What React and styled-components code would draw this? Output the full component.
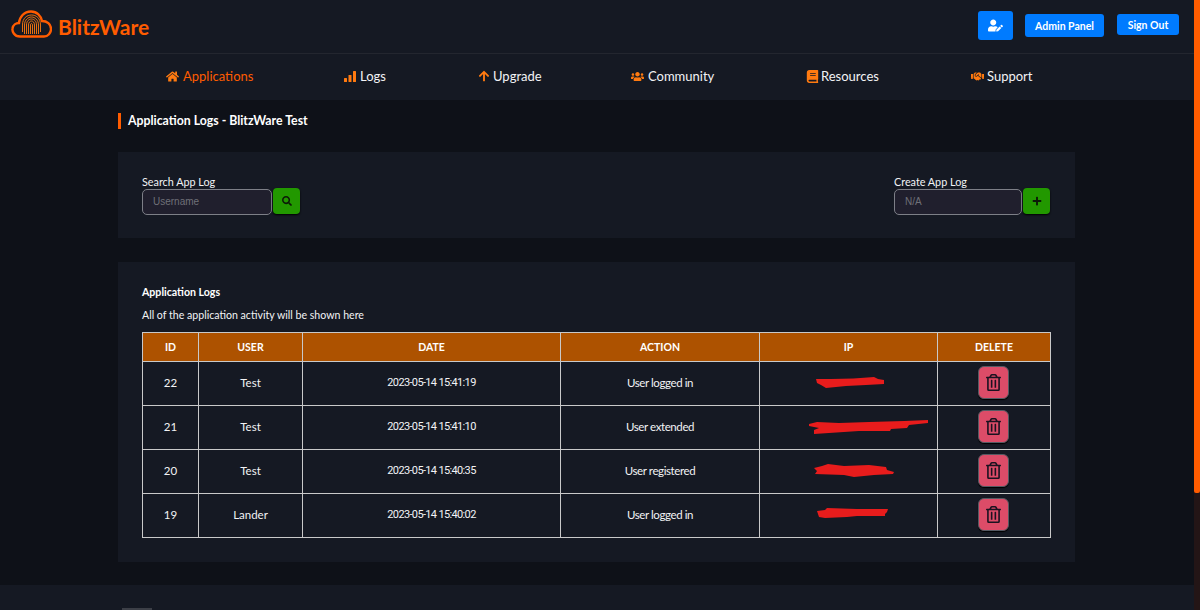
import React from 'react';
import styled, { createGlobalStyle } from 'styled-components';
import { FaHome, FaArrowUp, FaUsers, FaBook, FaHandshake, FaUserEdit, FaSearch, FaPlus, FaRegTrashAlt } from 'react-icons/fa';

const GlobalStyle = createGlobalStyle`
  html, body {
    margin: 0;
    height: 610px;
    overflow: hidden;
    background: #0e1118;
    color: #fff;
    font-family: Lato, "Open Sans", sans-serif;
  }
`
const Page = styled.div`
  display: flex;
  height: 610px;
`
const Content = styled.div`
  flex: 1;
  display: flex;
  flex-direction: column;
  min-width: 0;
`
const ScrollTrack = styled.div`
  width: 6px;
  background: #231516;
`
const ScrollThumb = styled.div`
  height: 493px;
  border-radius: 0 0 2px 2px;
  background: #ff5c00;
`
const Header = styled.header`
  flex-shrink: 0;
  display: flex;
  align-items: center;
  height: 53px;
  padding: 0 15px 0 11px;
  background: #151923;
  border-bottom: 1px solid #23262f;
`
const Brand = styled.div`
  display: flex;
  align-items: center;
  gap: 6px;
  color: #ff5c00;
  font-size: 21px;
  font-weight: 700;
  svg { margin-bottom: 5px; }
`
const HeaderActions = styled.div`
  display: flex;
  align-items: center;
  margin-left: auto;
  margin-bottom: 2px;
`
const BlueButton = styled.button`
  display: flex;
  align-items: center;
  justify-content: center;
  width: ${props => props.$w}px;
  height: ${props => props.$h}px;
  margin-left: ${props => props.$gap}px;
  margin-bottom: ${props => props.$lift || 0}px;
  padding: 0;
  border: none;
  border-radius: 3px;
  background: #007bff;
  color: #fff;
  font-family: inherit;
  font-size: 10.5px;
  font-weight: 700;
`
const Nav = styled.nav`
  flex-shrink: 0;
  display: flex;
  align-items: center;
  height: 44px;
  padding: 0 0 2px 166px;
  background: #151923;
`
const NavItem = styled.div`
  display: flex;
  align-items: center;
  gap: ${props => props.$gap || 4}px;
  width: ${props => props.$w}px;
  font-size: 13px;
  color: ${props => props.$active ? '#ff5c00' : '#f2f3f5'};
  svg { color: #ff7a10; }
`
const Main = styled.main`
  flex: 1;
  min-height: 0;
  padding: 0 119px 0 118px;
`
const Title = styled.h1`
  margin: 13px 0 23px;
  height: 16px;
  padding-left: 7px;
  border-left: 3px solid #ff5c00;
  font-size: 12.3px;
  line-height: 15px;
  font-weight: 700;
`
const Card = styled.section`
  background: #151923;
  padding: ${props => props.$pad};
  margin-bottom: 24px;
`
const SearchRow = styled.div`
  display: flex;
  justify-content: space-between;
  padding-right: 1px;
`
const FieldLabel = styled.label`
  display: block;
  margin-bottom: 2px;
  font-size: 10.8px;
  line-height: 11px;
  color: #f2f3f5;
`
const InputRow = styled.div`
  display: flex;
  align-items: flex-start;
  gap: 1px;
`
const TextInput = styled.input`
  box-sizing: border-box;
  width: ${props => props.$w}px;
  height: 26px;
  padding: 0 10px 2px;
  border: 1px solid #7d7f87;
  border-radius: 5px;
  background: #201f2d;
  color: #fff;
  font-family: "Liberation Sans", sans-serif;
  font-size: 10px;
  &::placeholder { color: #6f7078; opacity: 1; }
`
const GreenButton = styled.button`
  display: flex;
  align-items: center;
  justify-content: center;
  width: 27px;
  height: 26px;
  margin-top: -1px;
  padding: 0;
  border: none;
  border-radius: 4px;
  background: #229800;
  color: #0c1a08;
  font-size: 10px;
  box-shadow: 0 1px 2px #000;
`
const CardTitle = styled.h2`
  margin: 0;
  font-size: 10.6px;
  line-height: 16px;
  font-weight: 700;
`
const CardText = styled.p`
  margin: 7px 0 9px;
  font-size: 10.6px;
  line-height: 16px;
  color: #f2f3f5;
`
const Table = styled.table`
  width: 908px;
  table-layout: fixed;
  border-collapse: collapse;
  font-size: 11.5px;
  text-align: center;
`
const Th = styled.th`
  height: 28px;
  padding: 0;
  border: 1px solid #c9c9c9;
  background: #ad5200;
  font-weight: 700;
  font-size: 10.5px;
`
const Td = styled.td`
  box-sizing: border-box;
  height: 44px;
  padding: 0 0 2px;
  border: 1px solid #c9c9c9;
  color: #f2f3f5;
`
const DateCell = styled(Td)`
  font-family: Roboto, sans-serif;
  font-size: 11px;
  letter-spacing: -0.65px;
`
const ActionCell = styled(Td)`
  letter-spacing: -0.4px;
`
const DeleteButton = styled.button`
  display: flex;
  align-items: center;
  justify-content: center;
  width: 31px;
  height: 33px;
  margin: 0 0 0 40px;
  padding: 0;
  border: 1px solid #555a63;
  border-radius: 6px;
  background: #dc4c68;
  color: #1a1220;
  font-size: 17px;
  box-shadow: 0 1px 1px #000;
`
const Scribble = styled.svg`
  display: block;
  margin-left: ${props => props.$x}px;
  margin-bottom: ${props => props.$lift || 0}px;
`
const Footer = styled.footer`
  flex-shrink: 0;
  height: 25px;
  background: #151923;
  position: relative;
`
const FooterTab = styled.div`
  position: absolute;
  left: 122px;
  bottom: 0;
  width: 30px;
  height: 2px;
  background: #3c3f47;
`

const Logo = () => (
  <svg width="41" height="28" viewBox="0 0 41 28" fill="none">
    <path d="M9 26.500 C3 26.500 1 21 1.500 18.500 C2 15 5 13 8 13 C8.500 7 13 1.500 20 1.500 C26 1.500 30 6 31 11 C36 11 40 14 40 19 C40 23 37 26.500 33 26.500 Z" stroke="#ff5c00" strokeWidth="2.400" />
    <g stroke="#ff7a10" strokeWidth="0.900">
      <path d="M11.500 22 V15 C11.500 8 16 5 20.500 5 C25 5 29.500 8 29.500 15 V22" />
      <path d="M13.500 24 V15 C13.500 10 17 7 20.500 7 C24 7 27.500 10 27.500 15 V24" />
      <path d="M15.500 24 V15 C15.500 11 18 9 20.500 9 C23 9 25.500 11 25.500 15 V24" />
      <path d="M17.500 24 V15 C17.500 12.500 19 11 20.500 11 C22 11 23.500 12.500 23.500 15 V24" />
      <path d="M19.500 24 V15 C19.500 14 20 13.500 20.500 13.500 C21 13.500 21.500 14 21.500 15 V24" />
    </g>
  </svg>
)

const SignalIcon = () => (
  <svg width="12" height="11" viewBox="0 0 12 11" fill="currentColor">
    <rect x="0" y="7" width="3" height="4" rx="0.500" />
    <rect x="4.500" y="4" width="3" height="7" rx="0.500" />
    <rect x="9" y="0" width="3" height="11" rx="0.500" />
  </svg>
)

const navItems = [
  { label: 'Applications', icon: <FaHome size={13} />, w: 178, active: true },
  { label: 'Logs', icon: <SignalIcon />, w: 134 },
  { label: 'Upgrade', icon: <FaArrowUp size={12} />, w: 153, gap: 3 },
  { label: 'Community', icon: <FaUsers size={13} />, w: 175 },
  { label: 'Resources', icon: <FaBook size={13} />, w: 165, gap: 2 },
  { label: 'Support', icon: <FaHandshake size={13} />, w: 100, gap: 3 },
]

const columns = [
  { label: 'ID', w: 56 },
  { label: 'USER', w: 104 },
  { label: 'DATE', w: 258 },
  { label: 'ACTION', w: 199 },
  { label: 'IP', w: 178 },
  { label: 'DELETE', w: 113 },
]

const logs = [
  { id: 22, user: 'Test', date: '2023-05-14 15:41:19', action: 'User logged in', x: 56, w: 68, h: 11, d: 'M0 2 L15 2 C30 2 45 1 58 0 L62 2 L68 3 L68 7 L50 8 L30 9 L10 11 L5 8 L1 6 Z' },
  { id: 21, user: 'Test', date: '2023-05-14 15:41:10', action: 'User extended', x: 49, w: 120, h: 14, d: 'M0 4 L8 2 L30 3 L60 2 L95 1 L119 0 L119 3 L100 5 L98 8 L82 9 L81 11 L50 11 L20 13 L5 14 L5 10 L10 8 L0 6 Z' },
  { id: 20, user: 'Test', date: '2023-05-14 15:40:35', action: 'User registered', x: 54, w: 80, h: 13, d: 'M0 4 L8 2 L14 0 L30 2 L55 1 L72 3 L73 6 L80 8 L79 10 L60 11 L40 13 L30 11 L1 10 L3 7 Z' },
  { id: 19, user: 'Lander', date: '2023-05-14 15:40:02', action: 'User logged in', x: 57, w: 72, h: 11, lift: 2, d: 'M0 3 L8 2 L10 0 L40 1 L71 1 L70 4 L68 6 L68 8 L40 8 L30 9 L8 10 L2 9 Z' },
]

function App() {
  return (
    <Page>
      <GlobalStyle />
      <Content>
        <Header>
          <Brand><Logo /><span>BlitzWare</span></Brand>
          <HeaderActions>
            <BlueButton $w={35} $h={29}><FaUserEdit size={15} /></BlueButton>
            <BlueButton $w={79} $h={23} $gap={12}>Admin Panel</BlueButton>
            <BlueButton $w={62} $h={21} $gap={13} $lift={2}>Sign Out</BlueButton>
          </HeaderActions>
        </Header>
        <Nav>
          {navItems.map(item => (
            <NavItem key={item.label} $w={item.w} $active={item.active} $gap={item.gap}>
              {item.icon}<span>{item.label}</span>
            </NavItem>
          ))}
        </Nav>
        <Main>
          <Title>Application Logs - BlitzWare Test</Title>
          <Card $pad="24px 24px 23px">
            <SearchRow>
              <div>
                <FieldLabel>Search App Log</FieldLabel>
                <InputRow>
                  <TextInput $w={130} placeholder="Username" />
                  <GreenButton><FaSearch /></GreenButton>
                </InputRow>
              </div>
              <div>
                <FieldLabel>Create App Log</FieldLabel>
                <InputRow>
                  <TextInput $w={128} placeholder="N/A" />
                  <GreenButton><FaPlus /></GreenButton>
                </InputRow>
              </div>
            </SearchRow>
          </Card>
          <Card $pad="22px 24px 24px">
            <CardTitle>Application Logs</CardTitle>
            <CardText>All of the application activity will be shown here</CardText>
            <Table>
              <colgroup>
                {columns.map(col => <col key={col.label} width={col.w} />)}
              </colgroup>
              <thead>
                <tr>{columns.map(col => <Th key={col.label}>{col.label}</Th>)}</tr>
              </thead>
              <tbody>
                {logs.map(log => (
                  <tr key={log.id}>
                    <Td>{log.id}</Td>
                    <Td>{log.user}</Td>
                    <DateCell>{log.date}</DateCell>
                    <ActionCell>{log.action}</ActionCell>
                    <Td>
                      <Scribble $x={log.x} $lift={log.lift} width={log.w} height={log.h} viewBox={`0 0 ${log.w} ${log.h}`}>
                        <path d={log.d} fill="#e81c1c" />
                      </Scribble>
                    </Td>
                    <Td><DeleteButton><FaRegTrashAlt /></DeleteButton></Td>
                  </tr>
                ))}
              </tbody>
            </Table>
          </Card>
        </Main>
        <Footer><FooterTab /></Footer>
      </Content>
      <ScrollTrack><ScrollThumb /></ScrollTrack>
    </Page>
  );
}

export default App;
